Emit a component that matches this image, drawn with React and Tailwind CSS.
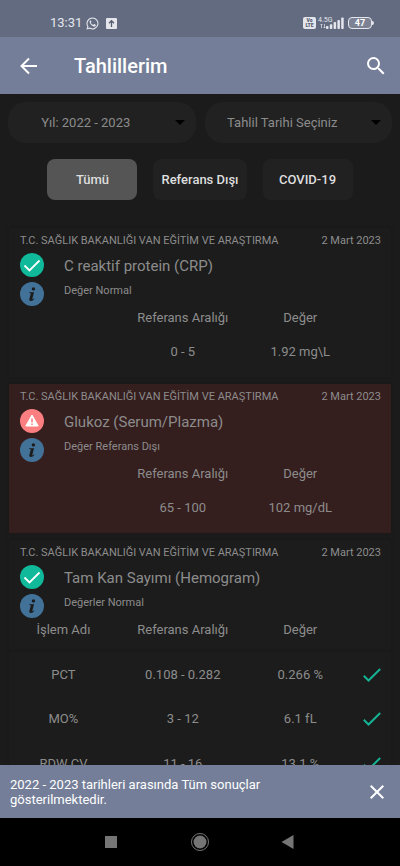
import { useState } from 'react';

const HOSPITAL = 'T.C. SAĞLIK BAKANLIĞI VAN EĞİTİM VE ARAŞTIRMA';

const results = [
  {
    id: 1,
    name: 'C reaktif protein (CRP)',
    date: '2 Mart 2023',
    status: 'Değer Normal',
    ok: true,
    range: '0 - 5',
    value: '1.92 mg\\L',
  },
  {
    id: 2,
    name: 'Glukoz (Serum/Plazma)',
    date: '2 Mart 2023',
    status: 'Değer Referans Dışı',
    ok: false,
    range: '65 - 100',
    value: '102 mg/dL',
  },
  {
    id: 3,
    name: 'Tam Kan Sayımı (Hemogram)',
    date: '2 Mart 2023',
    status: 'Değerler Normal',
    ok: true,
    items: [
      { name: 'PCT', range: '0.108 - 0.282', value: '0.266 %' },
      { name: 'MO%', range: '3 - 12', value: '6.1 fL' },
      { name: 'RDW CV', range: '11 - 16', value: '13.1 %' },
    ],
  },
];

const filters = ['Tümü', 'Referans Dışı', 'COVID-19'];

function StatusBar() {
  return (
    <div className="flex h-[37px] shrink-0 items-end justify-between bg-[#636b80] pb-1 pl-[50px] pr-[26px] text-[#e4e6ec]">
      <div className="flex h-5 items-center">
        <span className="text-[13px] leading-5">13:31</span>
        <svg viewBox="0 0 24 24" className="ml-1 size-[13px]" fill="currentColor">
          <path
            fillRule="evenodd"
            d="M12 .8a11.1 11.1 0 0 0-9.6 16.7L.8 23.2l5.9-1.5A11.1 11.1 0 1 0 12 .8Zm0 2a9.1 9.1 0 1 1-4.9 16.8l-3.5.9.9-3.4A9.1 9.1 0 0 1 12 2.8Z"
          />
          <path d="M8.700 6.400c-.5-.1-1 .2-1.400.7-1.900 2.200.3 5.700 2.900 8 2.800 2.400 6 3.500 7.500 1.400.7-1 .6-2-.1-2.400l-2-1c-.5-.2-.8-.1-1.100.3l-.8 1c-.3.3-.5.3-.9.1-1.700-.8-2.900-1.900-3.800-3.500-.2-.4 0-.6.2-.9l.6-.8c.2-.3.2-.6.1-.9l-.8-1.700c-.1-.2-.2-.3-.4-.3Z" />
        </svg>
        <svg viewBox="0 0 11 11" className="ml-[7px] size-[11px]">
          <rect width="11" height="11" rx="1" fill="currentColor" />
          <path d="M5.500 9V3M3 5.300l2.500-2.600L8 5.300" fill="none" stroke="#555c70" strokeWidth="1.300" />
        </svg>
      </div>
      <div className="flex h-5 items-center">
        <span className="flex h-3 w-[13px] flex-col items-center justify-center rounded-[2px] bg-[#e4e6ec] text-[5px] font-black leading-[5px] text-[#555c70]">
          <span>Vo</span>
          <span>LTE</span>
        </span>
        <span className="ml-0.5 flex w-4 flex-col text-[7px] leading-[6px]">
          <span>4.5G</span>
          <svg viewBox="0 0 6 6" className="ml-0.5 size-[6px]" fill="none" stroke="currentColor" strokeWidth=".7">
            <path d="M1.500 1v4M.5 2l1-1 1 1M4.500 5V1M3.500 4l1 1 1-1" />
          </svg>
        </span>
        <svg viewBox="0 0 18 12" className="-ml-2 h-3 w-[18px]" fill="currentColor">
          <rect x="0" y="9" width="2.500" height="3" rx=".8" />
          <rect x="3.800" y="7.300" width="2.500" height="4.700" rx=".8" />
          <rect x="7.600" y="5" width="2.500" height="7" rx=".8" />
          <rect x="11.400" y="3" width="2.500" height="9" rx=".8" />
          <rect x="15.200" y=".5" width="2.500" height="11.500" rx=".8" />
        </svg>
        <span className="ml-1 flex h-3 w-6 items-center justify-center rounded-[4px] border border-[#e4e6ec] bg-[#7d8394] text-[9px] font-bold leading-[10px] text-white">
          47
        </span>
        <span className="h-1 w-0.5 rounded-r-sm bg-[#e4e6ec]" />
      </div>
    </div>
  );
}

function Header() {
  return (
    <header className="flex h-[57px] shrink-0 items-center bg-[#747e98] pl-4 pr-3 text-white">
      <button aria-label="Geri" className="flex size-6 items-center justify-center">
        <svg viewBox="0 0 24 24" className="size-6" fill="none" stroke="currentColor" strokeWidth="2">
          <path d="M21 12H6M13 4.500 5.500 12l7.500 7.500" />
        </svg>
      </button>
      <h1 className="ml-[34px] flex-1 text-[20px] font-medium leading-6">Tahlillerim</h1>
      <button aria-label="Ara" className="flex size-6 items-center justify-center">
        <svg viewBox="0 0 24 24" className="size-6" fill="currentColor">
          <path d="M15.500 14h-.79l-.28-.27A6.470 6.470 0 0 0 16 9.500 6.500 6.500 0 1 0 9.500 16c1.610 0 3.090-.59 4.230-1.570l.27.28v.79l5 4.990L20.490 19l-4.990-5zm-6 0C7.010 14 5 11.990 5 9.500S7.010 5 9.500 5 14 7.010 14 9.500 11.990 14 9.500 14z" />
        </svg>
      </button>
    </header>
  );
}

function Dropdown({ label, text }) {
  return (
    <div className="relative flex-1">
      <select
        aria-label={label}
        className="h-[41px] w-full appearance-none rounded-[18px] bg-[#212121] pr-8 text-center text-[13px] text-[#8c8c8c] [text-align-last:center]"
      >
        <option>{text}</option>
      </select>
      <svg viewBox="0 0 10 5" className="pointer-events-none absolute right-[11px] top-[18px] h-[5px] w-2.5">
        <path d="M0 0h10L5 5z" fill="#000" />
      </svg>
    </div>
  );
}

function StatusIcon({ ok }) {
  return (
    <svg viewBox="0 0 24 24" className="size-6">
      <circle cx="12" cy="12" r="12" fill={ok ? '#10b99a' : '#fb7f80'} />
      {ok ? (
        <path d="m4.500 12.500 5 5L19.500 7.500" fill="none" stroke="#fff" strokeWidth="1.800" />
      ) : (
        <>
          <path d="M12 6 18.200 17H5.800z" fill="#fff" stroke="#fff" strokeLinejoin="round" />
          <path d="M12 9.500v4M12 14.500V16" stroke="#fb7f80" strokeWidth="1.500" />
        </>
      )}
    </svg>
  );
}

function InfoIcon() {
  return (
    <svg viewBox="0 0 24 24" className="size-6">
      <circle cx="12" cy="12" r="12" fill="#437299" />
      <circle cx="13.400" cy="6.900" r="1.700" fill="#1c1c1c" />
      <path
        d="M9.200 10.300h4.900l-1.800 6.500c-.2.700.4.600.9.200l.7-.7.5.4c-1.100 1.500-2.300 2.300-3.600 2.200-1.400-.1-1.700-1-1.400-2.200l1.300-4.700c.1-.6-.2-.9-1.500-.9z"
        fill="#1c1c1c"
      />
    </svg>
  );
}

function Tick() {
  return (
    <svg viewBox="0 0 18 14" className="mx-auto h-3.5 w-[18px]" role="img" aria-label="Normal">
      <path d="m.8 7.800 4.700 4.700L17.200 1" fill="none" stroke="#14b394" strokeWidth="2" />
    </svg>
  );
}

function ResultCard({ result }) {
  const { items } = result;

  return (
    <article
      className={`pt-px shadow-[0_0_2px_#171717] ${result.ok ? 'bg-[#1c1c1c]' : 'bg-[#351e1e]'} ${items ? '' : 'pb-[3px]'}`}
    >
      <div className="flex h-6 items-center justify-between pl-[11px] pr-2.5 text-[11px]">
        <span>{HOSPITAL}</span>
        <time dateTime="2023-03-02">{result.date}</time>
      </div>
      <div className="flex pl-[11px]">
        <div className="flex flex-col gap-[5px]">
          <StatusIcon ok={result.ok} />
          <button aria-label="Bilgi">
            <InfoIcon />
          </button>
        </div>
        <div className="ml-5 flex flex-col gap-1 pt-px">
          <h2 className="text-[15px] leading-6">{result.name}</h2>
          <p className="text-[11px] leading-[18px]">{result.status}</p>
        </div>
      </div>
      <table className="w-full table-fixed text-center text-[13px]">
        <colgroup>
          <col className="w-[28.5%]" />
          <col className="w-[34%]" />
          <col className="w-[27.5%]" />
          <col className="w-[10%]" />
        </colgroup>
        <thead>
          <tr className={items ? 'border-b-4 border-[#1a1a1a] align-top' : ''}>
            <th className={`p-0 font-normal leading-6 ${items ? 'pb-[7px]' : ''}`}>{items ? 'İşlem Adı' : ''}</th>
            <th className="p-0 font-normal leading-6">Referans Aralığı</th>
            <th className="p-0 font-normal leading-6">Değer</th>
            <th className="p-0" />
          </tr>
        </thead>
        <tbody>
          {items ? (
            items.map((item) => (
              <tr key={item.name} className="h-[45px]">
                <td>{item.name}</td>
                <td>{item.range}</td>
                <td>{item.value}</td>
                <td>
                  <Tick />
                </td>
              </tr>
            ))
          ) : (
            <tr className="h-11">
              <td />
              <td>{result.range}</td>
              <td>{result.value}</td>
              <td />
            </tr>
          )}
        </tbody>
      </table>
    </article>
  );
}

function Snackbar({ onClose }) {
  return (
    <div className="flex h-[53px] shrink-0 items-center justify-between bg-[#747e98] pl-2.5 pr-[13px] text-white">
      <p className="max-w-[280px] text-[13px] leading-[15px]">
        2022 - 2023 tarihleri arasında Tüm sonuçlar gösterilmektedir.
      </p>
      <button aria-label="Kapat" onClick={onClose} className="flex size-5 items-center justify-center">
        <svg viewBox="0 0 14 14" className="size-3.5" stroke="currentColor" strokeWidth="2">
          <path d="m.7.7 12.600 12.600M13.300.7.7 13.300" />
        </svg>
      </button>
    </div>
  );
}

function NavBar() {
  return (
    <nav className="flex h-12 shrink-0 items-center justify-center gap-[68px] bg-black text-[#757575]">
      <button aria-label="Son uygulamalar">
        <svg viewBox="0 0 20 20" className="size-5" fill="currentColor">
          <rect x="3" y="4" width="12" height="12" />
        </svg>
      </button>
      <button aria-label="Ana ekran">
        <svg viewBox="0 0 20 20" className="size-5" fill="currentColor">
          <circle cx="10" cy="10" r="6.500" />
          <circle cx="10" cy="10" r="8.500" fill="none" stroke="currentColor" />
        </svg>
      </button>
      <button aria-label="Geri dön">
        <svg viewBox="0 0 20 20" className="size-5" fill="currentColor">
          <path d="m3.500 10 12-7v14z" />
        </svg>
      </button>
    </nav>
  );
}

export default function App() {
  const [activeFilter, setActiveFilter] = useState('Tümü');
  const [showInfo, setShowInfo] = useState(true);

  return (
    <div className="flex h-screen flex-col bg-[#1b1b1b] font-[Roboto,sans-serif] text-[#8c8c8c]">
      <StatusBar />
      <Header />

      <main className="min-h-0 flex-1 overflow-y-auto [scrollbar-width:none]">
        <div className="flex gap-[9px] px-2 pt-2">
          <Dropdown label="Yıl" text="Yıl: 2022 - 2023" />
          <Dropdown label="Tahlil tarihi" text="Tahlil Tarihi Seçiniz" />
        </div>

        {/* Filters */}
        <div className="mt-4 flex justify-center gap-4">
          {filters.map((filter) => (
            <button
              key={filter}
              onClick={() => setActiveFilter(filter)}
              className={`h-[41px] min-w-[90px] rounded-lg px-2 text-[13px] font-medium text-[#dedede] ${
                activeFilter === filter ? 'bg-[#555555]' : 'bg-[#212121]'
              }`}
            >
              {filter}
            </button>
          ))}
        </div>

        {/* Results */}
        <div className="mt-7 flex flex-col gap-[7px] px-[9px]">
          {results.map((result) => (
            <ResultCard key={result.id} result={result} />
          ))}
        </div>
      </main>

      {showInfo && <Snackbar onClose={() => setShowInfo(false)} />}
      <NavBar />
    </div>
  );
}
